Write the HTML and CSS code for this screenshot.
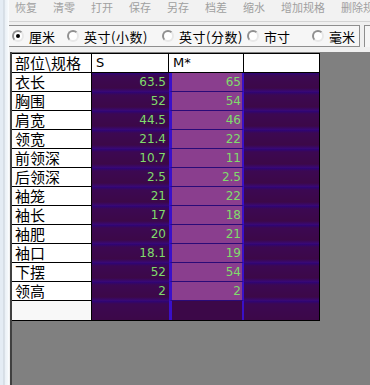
FILE: index.html
```html
<!DOCTYPE html>
<html>
<head>
<meta charset="utf-8">
<link rel="stylesheet" href="styles.css">
</head>
<body>
<div class="app">
  <div class="frame"></div>
  <div class="main">
    <div class="toolbar">
      <span class="tb">恢复</span><span class="tb">清零</span><span class="tb">打开</span><span class="tb">保存</span><span class="tb">另存</span><span class="tb">档差</span><span class="tb">缩水</span><span class="tb">增加规格</span><span class="tb">删除规格</span>
    </div>
    <div class="radiorow">
      <div class="radiobox">
        <label class="radio r1"><span class="dot checked"></span>厘米</label>
        <label class="radio r2"><span class="dot"></span>英寸(小数)</label>
        <label class="radio r3"><span class="dot"></span>英寸(分数)</label>
        <label class="radio r4"><span class="dot"></span>市寸</label>
        <label class="radio r5"><span class="dot"></span>毫米</label>
      </div>
      <div class="stub"></div>
    </div>
    <div class="panel">
      <div class="grid">
        <div class="hd c0">部位\规格</div><div class="hd">S</div><div class="hd">M*</div><div class="hd last"></div>

        <div class="nm">衣长</div><div class="v">63.5</div><div class="m">65</div><div class="e"></div>
        <div class="nm">胸围</div><div class="v">52</div><div class="m">54</div><div class="e"></div>
        <div class="nm">肩宽</div><div class="v">44.5</div><div class="m">46</div><div class="e"></div>
        <div class="nm">领宽</div><div class="v">21.4</div><div class="m">22</div><div class="e"></div>
        <div class="nm">前领深</div><div class="v">10.7</div><div class="m">11</div><div class="e"></div>
        <div class="nm">后领深</div><div class="v">2.5</div><div class="m">2.5</div><div class="e"></div>
        <div class="nm">袖笼</div><div class="v">21</div><div class="m">22</div><div class="e"></div>
        <div class="nm">袖长</div><div class="v">17</div><div class="m">18</div><div class="e"></div>
        <div class="nm">袖肥</div><div class="v">20</div><div class="m">21</div><div class="e"></div>
        <div class="nm">袖口</div><div class="v">18.1</div><div class="m">19</div><div class="e"></div>
        <div class="nm">下摆</div><div class="v">52</div><div class="m">54</div><div class="e"></div>
        <div class="nm">领高</div><div class="v">2</div><div class="m">2</div><div class="e"></div>
        <div class="nm blank"></div><div class="v blank"></div><div class="m blank"></div><div class="e blank"></div>
      </div>
    </div>
  </div>
</div>
</body>
</html>
```

FILE: styles.css
```css
html, body {
  margin: 0;
  padding: 0;
}
body {
  width: 370px;
  height: 385px;
  overflow: hidden;
  background: #f0f0f0;
  font-family: "Noto Sans CJK SC", "DejaVu Sans", sans-serif;
}
.app {
  display: flex;
  height: 385px;
  overflow: hidden;
}
.frame {
  width: 9px;
  flex: none;
  background: linear-gradient(to right, #e4ecf4 0, #e4ecf4 3px, #c8d0d8 4px, #eaf0f6 5px, #f4f8fb 8px, #ffffff 9px);
}
.main {
  flex: 1;
  display: flex;
  flex-direction: column;
  min-width: 0;
  overflow: hidden;
}
.toolbar {
  height: 21px;
  display: flex;
  align-items: flex-start;
  gap: 16px;
  padding-left: 6px;
  font-size: 11px;
  line-height: 15px;
  color: #a0a0a0;
  white-space: nowrap;
  overflow: hidden;
  border-bottom: 1px solid #d4d4d4;
  background: #f2f2f2;
}
.tb {
  flex: none;
}
.radiorow {
  display: flex;
  align-items: flex-start;
  padding-top: 3px;
  height: 27px;
}
.radiobox {
  width: 352px;
  height: 22px;
  flex: none;
  box-sizing: border-box;
  border: 1px solid #8e8e8e;
  background: #f6f6f6;
  display: flex;
  align-items: center;
  padding-left: 3px;
  font-size: 13px;
  color: #000;
  white-space: nowrap;
  margin-left: -1px;
}
.radio {
  display: flex;
  align-items: center;
  gap: 5px;
  flex: none;
}
.r1 { width: 55px; }
.r2 { width: 95px; }
.r3 { width: 85px; }
.r4 { width: 65px; }
.r2, .r3 { letter-spacing: 0.5px; }
.dot {
  width: 8px;
  height: 8px;
  border-radius: 50%;
  border: 2px solid;
  border-color: #909090 #e8e8e8 #e8e8e8 #909090;
  background: #fff;
  position: relative;
}
.dot.checked::after {
  content: "";
  position: absolute;
  left: 2px;
  top: 2px;
  width: 4px;
  height: 4px;
  border-radius: 50%;
  background: #000;
}
.stub {
  width: 12px;
  height: 22px;
  margin-left: 4px;
  box-sizing: border-box;
  border-left: 1px solid #8e8e8e;
  border-top: 1px solid #8e8e8e;
  background: #f6f6f6;
}
.panel {
  flex: 1;
  background: #808080;
  border-left: 2px solid #404040;
  margin-left: 1px;
  padding-top: 1px;
}
.grid {
  display: grid;
  grid-template-columns: 80px 77px 75px 75px;
  grid-template-rows: 19px repeat(13, 19px);
  width: 307px;
  border-top: 1px solid #000;
  border-bottom: 1px solid #000;
  border-right: 1px solid #000;
}
.hd {
  background: #fff;
  border-right: 1px solid #000;
  border-bottom: 1px solid #000;
  font-family: "DejaVu Sans", sans-serif;
  font-size: 13px;
  line-height: 18px;
  padding-left: 4px;
  white-space: nowrap;
}
.hd.c0 {
  font-family: "Noto Sans CJK SC", sans-serif;
  font-size: 15px;
  padding-left: 3px;
}
.hd.last {
  border-right: none;
}
.nm {
  background: #fff;
  border-right: 1px solid #000;
  border-bottom: 1px solid #000;
  font-size: 15px;
  line-height: 18px;
  padding-left: 3px;
  white-space: nowrap;
}
.nm.blank {
  background: #f8f8f8;
  border-bottom: none;
}
.v, .m, .e {
  font-family: "DejaVu Sans", sans-serif;
  font-size: 12px;
  line-height: 19px;
  color: #80dc6c;
  text-align: right;
}
.v, .e {
  background: linear-gradient(to bottom, #2e0478 0, #3c0852 3px, #3c0848 15px, #38087c 19px);
  padding-right: 3px;
}
.m {
  background: #8a3e8e;
  border-left: 3px solid #3a10c8;
  border-right: 2px solid #3a10c8;
  border-bottom: 1px solid #2a0a78;
  line-height: 18px;
  padding-right: 1px;
}
.m.blank {
  background: #3c0848;
  border-bottom: none;
}
.v.blank, .e.blank {
  background: linear-gradient(to bottom, #2e0478 0, #3c0852 3px, #3c0848 19px);
}
```
